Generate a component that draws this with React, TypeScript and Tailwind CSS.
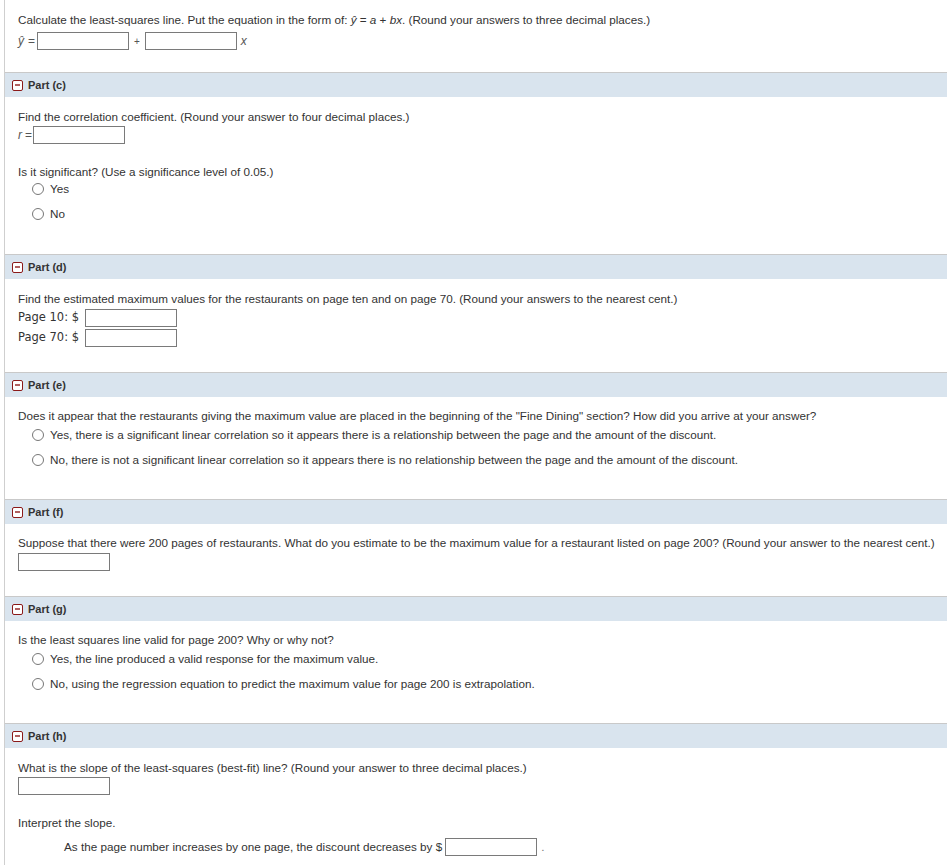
import React from 'react';

const FONT = { fontFamily: '"Liberation Sans", Arial, sans-serif' };
const VERDANA = { fontFamily: '"DejaVu Sans", Verdana, sans-serif' };

function PartHeader({ label }: { label: string }) {
    return (
        <div className="h-[25px] border-t border-[#c9c9c9] bg-[#d9e4ee] flex items-center pl-[7px] gap-[5px]">
            <span className="w-[11px] h-[11px] border border-[#8b1a1a] rounded-[2px] bg-white flex items-center justify-center">
                <span className="w-[5px] h-[2px] bg-[#b06060]" />
            </span>
            <span className="text-[11px] leading-[14px] font-bold text-[#333]">{label}</span>
        </div>
    );
}

function Box({ className = '' }: { className?: string }) {
    return <span className={`inline-block w-[92px] h-[18px] border border-[#7a7a7a] bg-white align-middle ${className}`} />;
}

function Radio({ label, className = '' }: { label: string; className?: string }) {
    return (
        <div className={`flex items-center h-[14px] pl-[14px] gap-[6px] whitespace-nowrap ${className}`}>
            <span className="w-[12px] h-[12px] rounded-full border border-[#777] bg-white shrink-0" />
            <span>{label}</span>
        </div>
    );
}

function Line({ children, className = '' }: { children: React.ReactNode; className?: string }) {
    return <div className={`h-[14px] leading-[14px] whitespace-nowrap ${className}`}>{children}</div>;
}

export default function App() {
    return (
        <div className="w-[947px] h-[865px] bg-white pl-[4px] overflow-hidden" style={FONT}>
            <div className="border-l border-[#cfcfcf] h-full text-[11.7px] text-[#333]">
                {/* intro */}
                <div className="pl-[13px] pt-[13px] pb-[22px]">
                    <Line>
                        Calculate the least-squares line. Put the equation in the form of: <i>ŷ</i> = <i>a</i> + <i>bx</i>. (Round your answers to three decimal places.)
                    </Line>
                    <div className="mt-[5px] flex items-center h-[18px] text-[12px] text-[#555]">
                        <i>ŷ</i>
                        <span className="ml-[4px] mr-[2px]">=</span>
                        <Box />
                        <span className="mx-[5px] text-[10px]">+</span>
                        <Box />
                        <i className="ml-[4px]">x</i>
                    </div>
                </div>

                <PartHeader label="Part (c)" />
                <div className="pl-[13px] pt-[13px] pb-[33px]">
                    <Line>Find the correlation coefficient. (Round your answer to four decimal places.)</Line>
                    <div className="mt-[2px] flex items-center h-[18px] text-[12px] text-[#555]">
                        <i>r</i>
                        <span className="ml-[3px] mr-[1px]">=</span>
                        <Box />
                    </div>
                    <Line className="mt-[21px]">Is it significant? (Use a significance level of 0.05.)</Line>
                    <Radio label="Yes" className="mt-[3px]" />
                    <Radio label="No" className="mt-[11px]" />
                </div>

                <PartHeader label="Part (d)" />
                <div className="pl-[13px] pt-[13px] pb-[25px]">
                    <Line>Find the estimated maximum values for the restaurants on page ten and on page 70. (Round your answers to the nearest cent.)</Line>
                    <div className="mt-[3px] flex items-center h-[18px] gap-[6px]" style={VERDANA}>
                        <span className="text-[11.5px] text-[#333]">Page 10: $</span>
                        <Box />
                    </div>
                    <div className="mt-[2px] flex items-center h-[18px] gap-[6px]" style={VERDANA}>
                        <span className="text-[11.5px] text-[#333]">Page 70: $</span>
                        <Box />
                    </div>
                </div>

                <PartHeader label="Part (e)" />
                <div className="pl-[13px] pt-[12px] pb-[32px]">
                    <Line>Does it appear that the restaurants giving the maximum value are placed in the beginning of the "Fine Dining" section? How did you arrive at your answer?</Line>
                    <Radio label="Yes, there is a significant linear correlation so it appears there is a relationship between the page and the amount of the discount." className="mt-[5px]" />
                    <Radio label="No, there is not a significant linear correlation so it appears there is no relationship between the page and the amount of the discount." className="mt-[11px]" />
                </div>

                <PartHeader label="Part (f)" />
                <div className="pl-[13px] pt-[12px] pb-[25px]">
                    <Line>Suppose that there were 200 pages of restaurants. What do you estimate to be the maximum value for a restaurant listed on page 200? (Round your answer to the nearest cent.)</Line>
                    <div className="mt-[3px] h-[18px] flex">
                        <Box />
                    </div>
                </div>

                <PartHeader label="Part (g)" />
                <div className="pl-[13px] pt-[12px] pb-[32px]">
                    <Line>Is the least squares line valid for page 200? Why or why not?</Line>
                    <Radio label="Yes, the line produced a valid response for the maximum value." className="mt-[5px]" />
                    <Radio label="No, using the regression equation to predict the maximum value for page 200 is extrapolation." className="mt-[11px]" />
                </div>

                <PartHeader label="Part (h)" />
                <div className="pl-[13px] pt-[13px]">
                    <Line>What is the slope of the least-squares (best-fit) line? (Round your answer to three decimal places.)</Line>
                    <div className="mt-[2px] h-[18px] flex">
                        <Box />
                    </div>
                    <Line className="mt-[21px]">Interpret the slope.</Line>
                    <div className="mt-[8px] h-[18px] flex items-center pl-[46px] whitespace-nowrap">
                        <span>As the page number increases by one page, the discount decreases by $</span>
                        <Box className="ml-[3px]" />
                        <span className="ml-[4px] text-[#777]">.</span>
                    </div>
                </div>
            </div>
        </div>
    );
}
